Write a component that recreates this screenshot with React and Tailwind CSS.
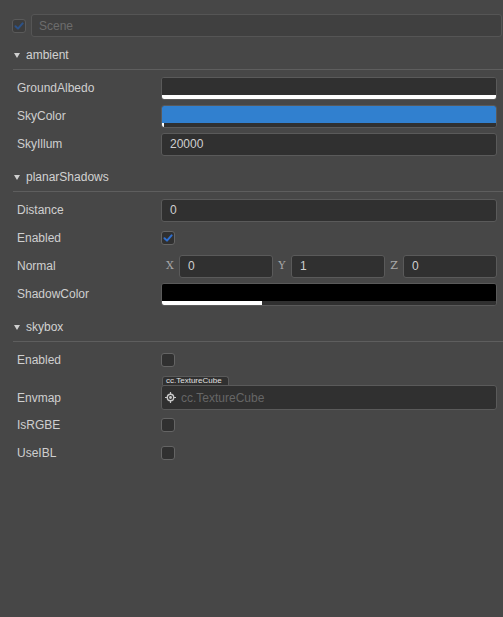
import React from 'react';

const Check = ({ color = '#2f6fd0' }) => (
  <svg width="10" height="10" viewBox="0 0 10 10" fill="none">
    <path d="M1.5 5.2 L4 7.6 L8.6 2.4" stroke={color} strokeWidth="2" strokeLinecap="round" strokeLinejoin="round" />
  </svg>
);

const Checkbox = ({ checked }) => (
  <div className="w-[14px] h-[14px] rounded-[3px] border border-[#646464] bg-[#303030] flex items-center justify-center">
    {checked && <Check />}
  </div>
);

const Input = ({ value }) => (
  <div className="h-[23px] flex-1 rounded-[3px] border border-[#5a5a5a] bg-[#303030] flex items-center pl-[8px] text-[12px] text-[#cfcfcf]">
    {value}
  </div>
);

// colour swatch with the alpha bar along the bottom
const ColorField = ({ color, alpha }) => (
  <div className="h-[23px] flex-1 rounded-[3px] border border-[#5a5a5a] bg-[#303030] flex flex-col overflow-hidden">
    <div className="flex-1" style={{ background: color }} />
    <div className="h-[4px] bg-[#303030]">
      <div className="h-full bg-white" style={{ width: alpha }} />
    </div>
  </div>
);

const Row = ({ label, children }) => (
  <div className="h-[28px] flex items-center pl-[17px] pr-[6px]">
    <div className="w-[144px] text-[12px] text-[#cfcfcf]">{label}</div>
    <div className="flex-1 flex items-center">{children}</div>
  </div>
);

const Section = ({ title, first, children }) => (
  <div>
    <div
      className={`${first ? 'h-[33px]' : 'h-[34px]'} ml-[13px] border-b border-[#5e5e5e] flex items-end pb-[7px]`}
    >
      <svg width="6" height="5" viewBox="0 0 6 5" className="mb-[4px] ml-[1px]">
        <path d="M0 0 H6 L3 5 Z" fill="#cfcfcf" />
      </svg>
      <span className="ml-[6px] text-[12px] leading-[14px] text-[#d2d2d2]">{title}</span>
    </div>
    <div className="pt-[4px]">{children}</div>
  </div>
);

const Vec = ({ axis, value }) => (
  <div className="flex items-center flex-1">
    <div className="w-[18px] text-center font-['DejaVu_Serif',serif] text-[11px] text-[#a8a8a8]">{axis}</div>
    <Input value={value} />
  </div>
);

const Target = () => (
  <svg width="11" height="11" viewBox="0 0 11 11" fill="none">
    <circle cx="5.5" cy="5.5" r="3.2" stroke="#c8c8c8" strokeWidth="1.4" />
    <circle cx="5.5" cy="5.5" r="1.4" fill="#c8c8c8" />
    <path d="M5.5 0 V2 M5.5 9 V11 M0 5.5 H2 M9 5.5 H11" stroke="#c8c8c8" strokeWidth="1.2" />
  </svg>
);

export default function App() {
  return (
    <div className="w-full h-screen bg-[#474747] font-['Liberation_Sans',Arial,sans-serif] overflow-hidden">
      {/* node header */}
      <div className="pt-[14px] flex items-center pr-[1px]">
        <div className="ml-[12px] w-[14px] h-[14px] rounded-[3px] border border-[#5a5a5a] bg-[#3c3c3c] flex items-center justify-center">
          <Check color="#2c5288" />
        </div>
        <div className="ml-[5px] flex-1 h-[23px] rounded-[3px] border border-[#555] bg-[#404040] flex items-center pl-[7px] text-[12px] text-[#6c6c6c]">
          Scene
        </div>
      </div>

      <Section title="ambient" first>
        <Row label="GroundAlbedo">
          <ColorField color="#303030" alpha="100%" />
        </Row>
        <Row label="SkyColor">
          <ColorField color="#3180cf" alpha="2px" />
        </Row>
        <Row label="SkyIllum">
          <Input value="20000" />
        </Row>
      </Section>

      <Section title="planarShadows">
        <Row label="Distance">
          <Input value="0" />
        </Row>
        <Row label="Enabled">
          <Checkbox checked />
        </Row>
        <Row label="Normal">
          <Vec axis="X" value="0" />
          <Vec axis="Y" value="1" />
          <Vec axis="Z" value="0" />
        </Row>
        <Row label="ShadowColor">
          <ColorField color="#000000" alpha="30%" />
        </Row>
      </Section>

      <Section title="skybox">
        <Row label="Enabled">
          <Checkbox />
        </Row>
        <div className="h-[37px] flex items-end pl-[17px] pr-[6px] pt-[2px] pb-[1px]">
          <div className="w-[144px] h-[25px] flex items-center text-[12px] text-[#cfcfcf]">Envmap</div>
          <div className="flex-1 flex flex-col">
            <div className="ml-[1px] w-[67px] h-[9px] rounded-t-[3px] border border-b-0 border-[#5a5a5a] bg-[#303030] text-[8px] leading-[8px] text-[#e0e0e0] pl-[3px] whitespace-nowrap overflow-hidden">
              cc.TextureCube
            </div>
            <div className="h-[25px] rounded-[3px] border border-[#5a5a5a] bg-[#303030] flex items-center pl-[3px]">
              <Target />
              <span className="ml-[5px] text-[12px] text-[#666]">cc.TextureCube</span>
            </div>
          </div>
        </div>
        <Row label="IsRGBE">
          <Checkbox />
        </Row>
        <Row label="UseIBL">
          <Checkbox />
        </Row>
      </Section>
    </div>
  );
}
